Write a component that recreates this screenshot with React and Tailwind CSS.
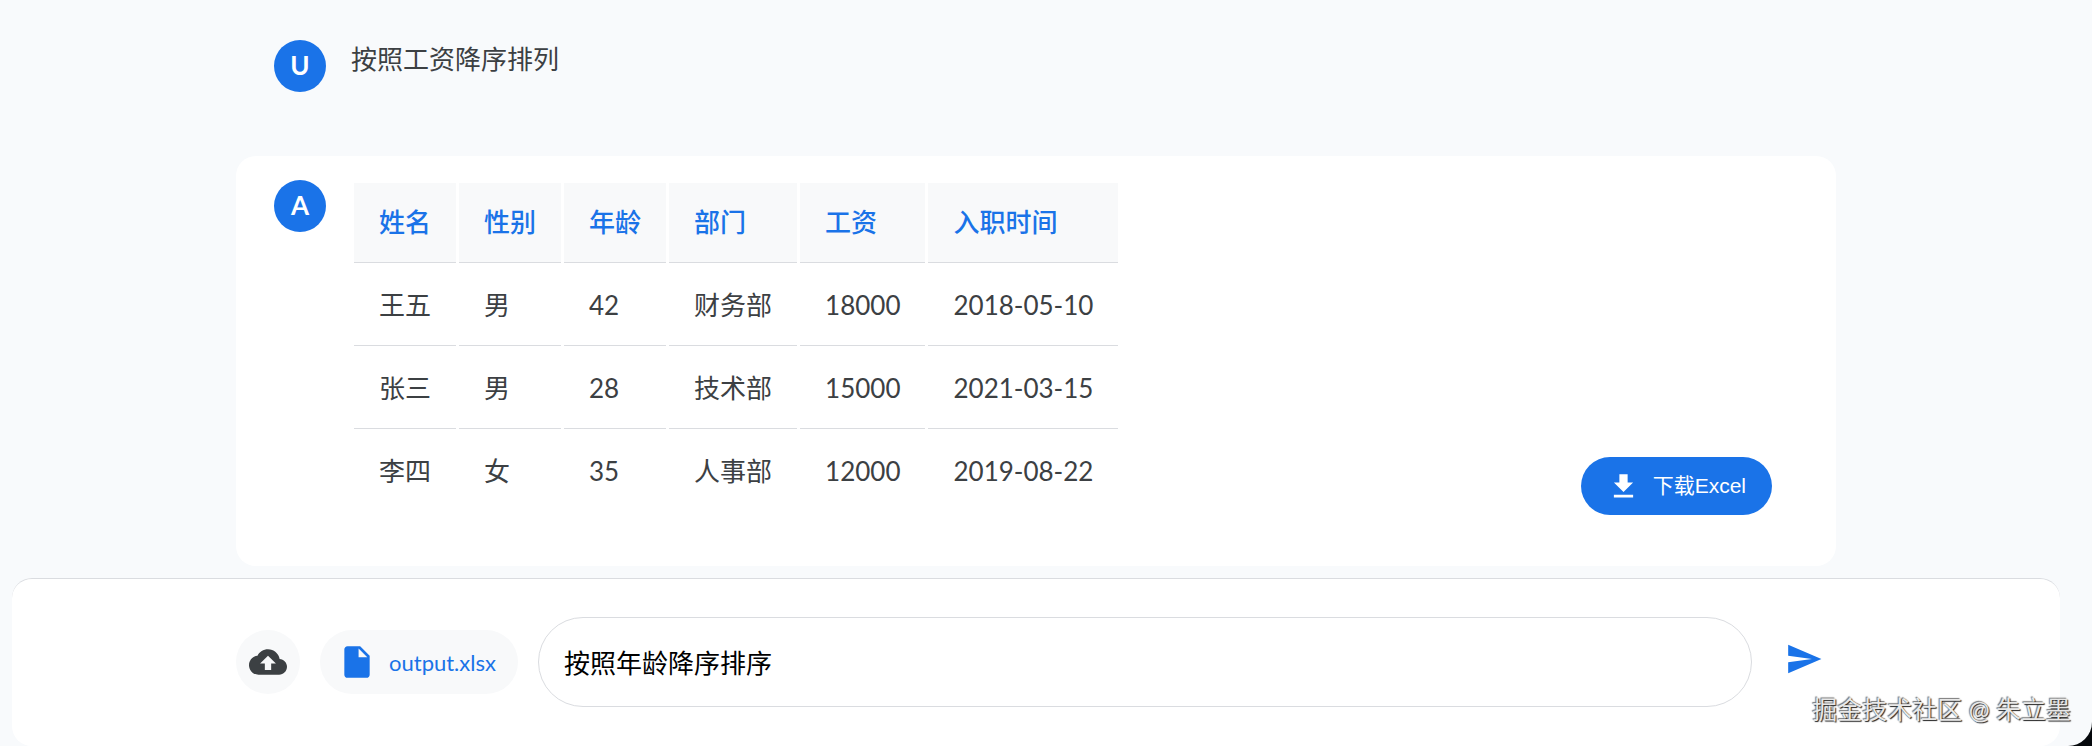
const columns = ["姓名", "性别", "年龄", "部门", "工资", "入职时间"];
const rows = [
  ["王五", "男", "42", "财务部", "18000", "2018-05-10"],
  ["张三", "男", "28", "技术部", "15000", "2021-03-15"],
  ["李四", "女", "35", "人事部", "12000", "2019-08-22"],
];

const Icon = ({ path, className }) => (
  <svg viewBox="0 0 24 24" fill="currentColor" aria-hidden="true" className={className}>
    <path d={path} />
  </svg>
);

const Avatar = ({ letter }) => (
  <div className="flex size-[52px] shrink-0 items-center justify-center rounded-full bg-[#1a73e8] pb-0.5 text-[26px] leading-none font-bold text-white">
    {letter}
  </div>
);

export default function App() {
  return (
    <div className="bg-[#05080c]">
      <div className="relative flex min-h-screen flex-col overflow-hidden rounded-br-[24px] bg-[#f8fafc] pr-5 font-[Lato,'Noto_Sans_CJK_SC',sans-serif] text-[26px] text-[#3c4043]">
        <main className="mx-auto w-full max-w-[1600px]">
          <section className="flex gap-[25px] px-[38px] pt-10 pb-16">
            <Avatar letter="U" />
            <p className="leading-[38px]">按照工资降序排列</p>
          </section>
          <section className="flex gap-[25px] rounded-[20px] bg-white px-[38px] pt-6 pb-[51px]">
            <Avatar letter="A" />
            <table className="border-separate border-spacing-[3px] text-left">
              <thead>
                <tr>
                  {columns.map((c) => (
                    <th key={c} className="h-[80px] border-b border-[#dadce0] bg-[#f8f9fa] px-[25px] pt-0 pb-0.5 leading-[40px] font-medium text-[#1a73e8]">
                      {c}
                    </th>
                  ))}
                </tr>
              </thead>
              <tbody className="[&>tr:last-child>td]:border-transparent">
                {rows.map((row) => (
                  <tr key={row[0]}>
                    {row.map((v, i) => (
                      <td key={i} className="h-[80px] border-b border-[#dadce0] px-[25px] pt-0 pb-0.5 leading-[40px]">
                        {v}
                      </td>
                    ))}
                  </tr>
                ))}
              </tbody>
            </table>
            <button
              type="button"
              className="mr-[26px] ml-auto flex h-[58px] items-center gap-[13px] self-end rounded-full bg-[#1a73e8] px-[26px] font-['Liberation_Sans','Noto_Sans_CJK_SC',sans-serif] text-[21px] text-white"
            >
              <Icon className="size-[33px]" path="M19 9h-4V3H9v6H5l7 7 7-7zM5 18v2h14v-2H5z" />
              下载Excel
            </button>
          </section>
        </main>

        <footer className="mx-3 mt-3 flex-1 rounded-[20px] border-t border-[#dadce0] bg-white pt-[38px] pb-[38px]">
          <form className="mx-auto flex max-w-[1600px] items-center gap-5" onSubmit={(e) => e.preventDefault()}>
            <button type="button" aria-label="上传文件" className="flex size-16 shrink-0 items-center justify-center rounded-full bg-[#f8f9fa]">
              <Icon
                className="size-[38px]"
                path="M19.35 10.04C18.67 6.59 15.64 4 12 4 9.11 4 6.6 5.64 5.35 8.04 2.34 8.36 0 10.91 0 14c0 3.31 2.69 6 6 6h13c2.76 0 5-2.24 5-5 0-2.64-2.05-4.78-4.65-4.96zM14 13v4h-4v-4H7l5-5 5 5h-3z"
              />
            </button>
            <div className="flex h-16 shrink-0 items-center gap-[13px] rounded-full bg-[#f8f9fa] pr-[22px] pl-[18px] text-[22px] text-[#1a73e8]">
              <Icon
                className="size-[38px]"
                path="M6 2c-1.1 0-1.99.9-1.99 2L4 20c0 1.1.89 2 1.99 2H18c1.1 0 2-.9 2-2V8l-6-6H6zm7 7V3.5L18.5 9H13z"
              />
              <span>output.xlsx</span>
            </div>
            <input
              type="text"
              aria-label="消息"
              defaultValue="按照年龄降序排序"
              className="h-[90px] min-w-0 flex-1 rounded-full border border-[#dadce0] bg-white px-[25px] pb-0.5 text-black outline-none"
            />
            <button type="submit" aria-label="发送" className="flex size-16 shrink-0 justify-center pt-[10px] text-[#1a73e8]">
              <Icon className="size-[38px]" path="M2.01 21L23 12 2.01 3 2 10l15 2-15 2z" />
            </button>
          </form>
        </footer>

        <div className="absolute right-[21px] bottom-[19px] text-[25px] leading-[36px] whitespace-nowrap text-[#e8e8e8] [text-shadow:1px_1px_1px_#222,-1px_-1px_1px_#777]">
          掘金技术社区 @ 朱立墨
        </div>
      </div>
    </div>
  );
}
